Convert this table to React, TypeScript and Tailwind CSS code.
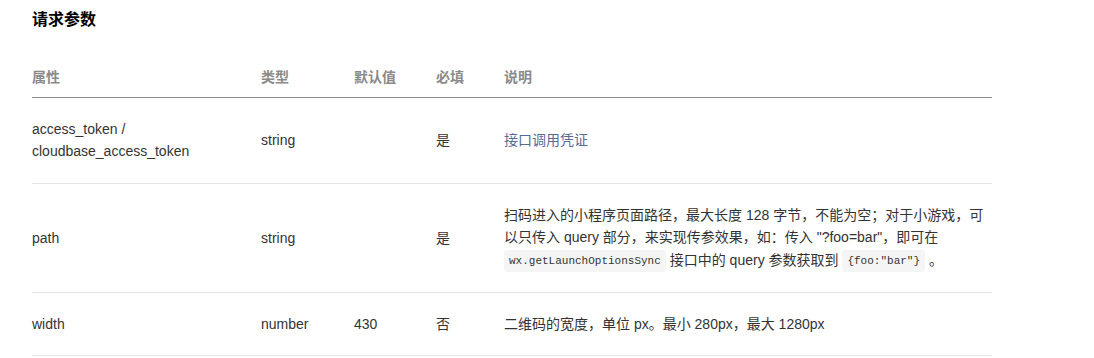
import React from "react";

const font = { fontFamily: '"Liberation Sans", "Noto Sans CJK SC", sans-serif' };

function Code({ children }: { children: React.ReactNode }) {
  return (
    <code className="inline-block rounded-[3px] bg-[#f5f5f5] px-[5px] py-0 text-[11px] leading-[22px] text-[#333] align-middle [font-family:'Liberation_Mono',monospace]">
      {children}
    </code>
  );
}

export default function App() {
  const rows = [
    {
      name: (
        <>
          access_token /<br />
          cloudbase_access_token
        </>
      ),
      type: "string",
      def: "",
      req: "是",
      desc: <span className="text-[#576b95]">接口调用凭证</span>,
    },
    {
      name: "path",
      type: "string",
      def: "",
      req: "是",
      desc: (
        <>
          扫码进入的小程序页面路径，最大长度 128 字节，不能为空；对于小游戏，可
          <br />
          以只传入 query 部分，来实现传参效果，如：传入 "?foo=bar"，即可在
          <br />
          <Code>wx.getLaunchOptionsSync</Code> 接口中的 query 参数获取到{" "}
          <Code>{'{foo:"bar"}'}</Code> 。
        </>
      ),
    },
    {
      name: "width",
      type: "number",
      def: "430",
      req: "否",
      desc: "二维码的宽度，单位 px。最小 280px，最大 1280px",
    },
  ];

  return (
    <div className="min-h-[358px] w-[1094px] bg-white pl-8 pt-2" style={font}>
      <h3 className="text-[16px] font-bold leading-6 text-black">请求参数</h3>
      <table className="mt-6 w-[960px] table-fixed border-collapse text-[14px] text-[#333]">
        <colgroup>
          <col className="w-[229px]" />
          <col className="w-[93px]" />
          <col className="w-[82px]" />
          <col className="w-[68px]" />
          <col />
        </colgroup>
        <thead>
          <tr className="border-b border-[#8c8c8c] text-left text-[#8a8a8a]">
            <th className="pt-[10px] pb-[9px] font-bold leading-[22px]">属性</th>
            <th className="pt-[10px] pb-[9px] font-bold leading-[22px]">类型</th>
            <th className="pt-[10px] pb-[9px] font-bold leading-[22px]">默认值</th>
            <th className="pt-[10px] pb-[9px] font-bold leading-[22px]">必填</th>
            <th className="pt-[10px] pb-[9px] font-bold leading-[22px]">说明</th>
          </tr>
        </thead>
        <tbody>
          {rows.map((r, i) => (
            <tr key={i} className="border-b border-[#e5e5e5] align-middle">
              <td className="py-5 leading-[22.4px]">{r.name}</td>
              <td className="py-5 leading-[22.4px]">{r.type}</td>
              <td className="py-5 leading-[22.4px]">{r.def}</td>
              <td className="py-5 leading-[22.4px]">{r.req}</td>
              <td className="py-5 leading-[22.4px]">{r.desc}</td>
            </tr>
          ))}
        </tbody>
      </table>
    </div>
  );
}
